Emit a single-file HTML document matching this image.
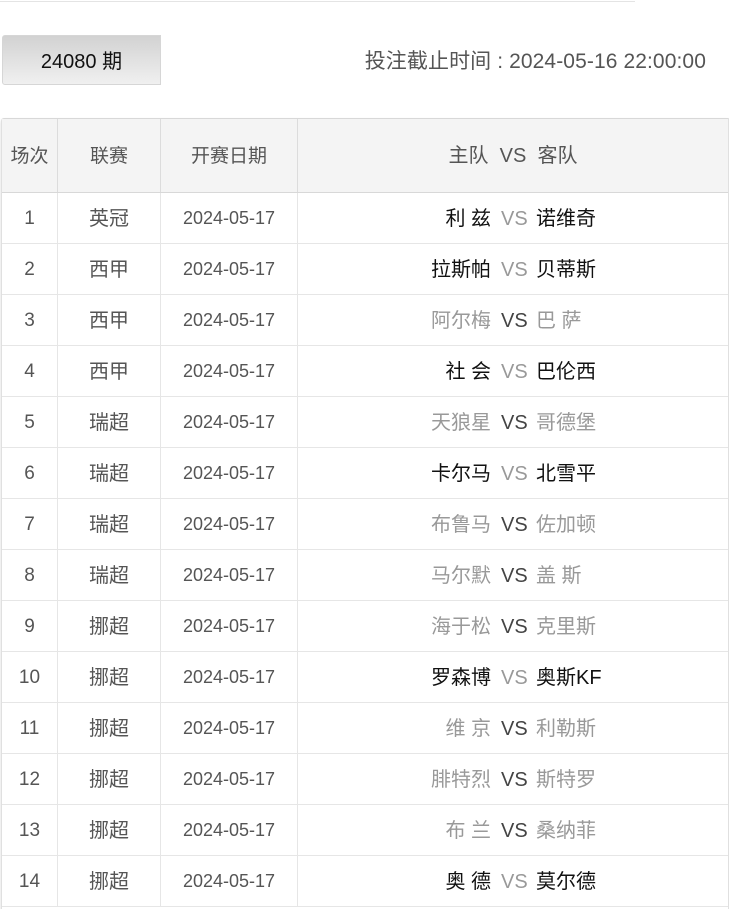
<!DOCTYPE html>
<html><head><meta charset="utf-8"><style>
body{margin:0;width:729px;height:909px;overflow:hidden;background:#fff;font-family:"Liberation Sans","Noto Sans CJK SC",sans-serif;position:relative}
.top{position:absolute;left:0;top:1px;width:635px;height:1px;background:#e4e4e4}
.btn{position:absolute;left:2px;top:35px;width:157px;height:48px;border:1px solid #d6d6d6;border-radius:3px 0 0 3px;background:linear-gradient(#d2d2d2,#f0f0f0);font-size:20px;color:#111;text-align:center;line-height:52px}
.dl{position:absolute;right:23px;top:49px;font-size:21px;color:#555;line-height:26px;letter-spacing:0.1px}
.tbl{position:absolute;left:1px;top:118px;width:726px;height:790px;border-top:1px solid #d8d8d8;border-left:1px solid #e0e0e0;border-right:1px solid #e0e0e0;border-radius:3px 0 0 0;box-shadow:0 2px 3px rgba(0,0,0,.15)}
.row{position:absolute;left:0;width:726px;border-bottom:1px solid #e6e6e6;font-size:20px;color:#555;line-height:52px}
.hd{top:0;height:73px;line-height:75px;background:#f4f4f4;border-bottom:1px solid #d8d8d8}
.c{position:absolute;top:0;height:100%;text-align:center;border-right:1px solid #e6e6e6;box-sizing:border-box}
.c1{left:0;width:56px;font-size:19px}.c2{left:56px;width:103px}.c3{left:159px;width:137px;font-size:18px;line-height:50px}
.hd .c{border-right-color:#dcdcdc;font-size:19px;line-height:75px}
.h,.v,.a{position:absolute;top:0;height:100%;font-size:20px;white-space:nowrap}
.h{right:237px}.v{left:499px}.a{left:534px}
.d{color:#111}.g{color:#999}.m{color:#444}
</style></head><body>
<div class="top"></div>
<div class="btn">24080 期</div>
<div class="dl">投注截止时间 : 2024-05-16 22:00:00</div>
<div class="tbl">
<div class="row hd"><div class="c c1">场次</div><div class="c c2">联赛</div><div class="c c3">开赛日期</div><div style="position:absolute;left:296px;width:430px;top:0;height:100%;text-align:center;font-size:20px">主队 &nbsp;VS&nbsp; 客队</div></div>
</div>
<script>
const d=[["英冠","利 兹","诺维奇",1],["西甲","拉斯帕","贝蒂斯",1],["西甲","阿尔梅","巴 萨",0],["西甲","社 会","巴伦西",1],["瑞超","天狼星","哥德堡",0],["瑞超","卡尔马","北雪平",1],["瑞超","布鲁马","佐加顿",0],["瑞超","马尔默","盖 斯",0],["挪超","海于松","克里斯",0],["挪超","罗森博","奥斯KF",1],["挪超","维 京","利勒斯",0],["挪超","腓特烈","斯特罗",0],["挪超","布 兰","桑纳菲",0],["挪超","奥 德","莫尔德",1]];
let h="";d.forEach((r,i)=>{const t=74+i*51;const x=r[3]?"d":"g",y=r[3]?"g":"m";
h+=`<div class="row" style="top:${t}px;height:50px"><div class="c c1">${i+1}</div><div class="c c2">${r[0]}</div><div class="c c3">2024-05-17</div><span class="h ${x}">${r[1]}</span><span class="v ${y}">VS</span><span class="a ${x}">${r[2]}</span></div>`});
document.querySelector('.tbl').insertAdjacentHTML('beforeend',h);
</script>
</body></html>
